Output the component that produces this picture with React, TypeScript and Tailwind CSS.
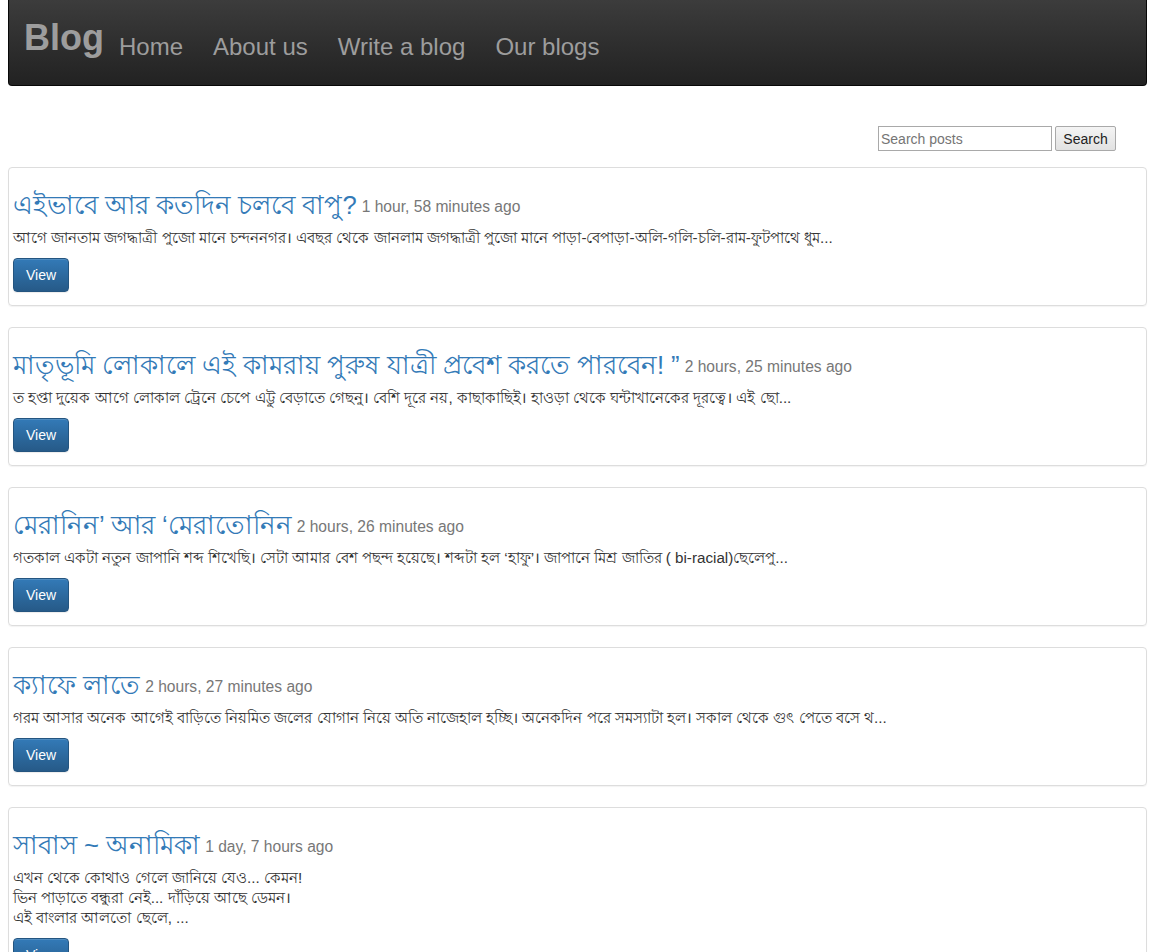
import React from "react";

const posts = [
  {
    title: "এইভাবে আর কতদিন চলবে বাপু?",
    time: "1 hour, 58 minutes ago",
    body: [
      "আগে জানতাম জগদ্ধাত্রী পুজো মানে চন্দননগর। এবছর থেকে জানলাম জগদ্ধাত্রী পুজো মানে পাড়া-বেপাড়া-অলি-গলি-চলি-রাম-ফুটপাথে ধুম...",
    ],
  },
  {
    title: "মাতৃভূমি লোকালে এই কামরায় পুরুষ যাত্রী প্রবেশ করতে পারবেন! ”",
    time: "2 hours, 25 minutes ago",
    body: [
      "ত হপ্তা দুয়েক আগে লোকাল ট্রেনে চেপে এট্টু বেড়াতে গেছনু। বেশি দূরে নয়, কাছাকাছিই। হাওড়া থেকে ঘন্টাখানেকের দূরত্বে। এই ছো...",
    ],
  },
  {
    title: "মেরানিন’ আর ‘মেরাতোনিন",
    time: "2 hours, 26 minutes ago",
    body: [
      "গতকাল একটা নতুন জাপানি শব্দ শিখেছি। সেটা আমার বেশ পছন্দ হয়েছে। শব্দটা হল ‘হাফু’। জাপানে মিশ্র জাতির ( bi-racial)ছেলেপু...",
    ],
  },
  {
    title: "ক্যাফে লাতে",
    time: "2 hours, 27 minutes ago",
    body: [
      "গরম আসার অনেক আগেই বাড়িতে নিয়মিত জলের যোগান নিয়ে অতি নাজেহাল হচ্ছি। অনেকদিন পরে সমস্যাটা হল। সকাল থেকে গুৎ পেতে বসে থ...",
    ],
  },
  {
    title: "সাবাস ~ অনামিকা",
    time: "1 day, 7 hours ago",
    body: [
      "এখন থেকে কোথাও গেলে জানিয়ে যেও... কেমন!",
      "ভিন পাড়াতে বন্ধুরা নেই... দাঁড়িয়ে আছে ডেমন।",
      "এই বাংলার আলতো ছেলে, ...",
    ],
  },
];

const navLinks = ["Home", "About us", "Write a blog", "Our blogs"];

const App = () => {
  return (
    <div className="min-h-screen bg-white pl-2 pr-[7px] font-['Liberation_Sans','Noto_Sans',sans-serif] text-[#333]">
      {/* Navbar */}
      <nav className="flex h-[86px] items-start rounded-b-[4px] border border-t-0 border-[#080808] bg-gradient-to-b from-[#3c3c3c] to-[#222222] pl-[15px]">
        <a className="mt-[20px] text-[36px] font-bold leading-[36px] text-[#9d9d9d]">
          Blog
        </a>
        <ul className="ml-[15px] mt-[35px] flex gap-[30px]">
          {navLinks.map((l) => (
            <li key={l} className="text-[24px] leading-[24px] text-[#9d9d9d]">
              {l}
            </li>
          ))}
        </ul>
      </nav>

      {/* Search */}
      <div className="mr-[31px] mt-[40px] flex justify-end gap-[3px]">
        <input
          placeholder="Search posts"
          className="h-[25px] w-[174px] border border-[#a9a9a9] px-[2px] text-[14px] text-[#333] placeholder:text-[#757575]"
        />
        <button className="h-[25px] w-[61px] rounded-[2px] border border-[#a9a9a9] bg-gradient-to-b from-[#f4f4f4] to-[#e2e2e2] pt-[1px] text-[14px] text-[#222]">
          Search
        </button>
      </div>

      {/* Posts */}
      <div className="mt-[16px] flex flex-col gap-[21px]">
        {posts.map((p) => (
          <div
            key={p.title}
            className="rounded-[4px] border border-[#dddddd] px-[4px] pb-[13px] pt-[22px] shadow-[0_1px_1px_rgba(0,0,0,0.05)]"
          >
            <h3 className="flex h-[30px] items-center whitespace-nowrap text-[#337ab7]">
              <span className="text-[25.6px] leading-[30px]">{p.title}</span>
              <span className="ml-[5px] mt-[4px] text-[15.6px] leading-[30px] text-[#777777]">
                {p.time}
              </span>
            </h3>
            <div className="mt-[8px] text-[15.2px] text-[#333]">
              {p.body.map((b) => (
                <p key={b} className="h-[20px] whitespace-nowrap leading-[20px]">
                  {b}
                </p>
              ))}
            </div>
            <button className="mt-[10px] h-[34px] rounded-[4px] border border-[#245580] bg-gradient-to-b from-[#337ab7] to-[#265a88] px-[12px] text-[14px] text-white shadow-[inset_0_1px_0_rgba(255,255,255,0.15),0_1px_1px_rgba(0,0,0,0.075)]">
              View
            </button>
          </div>
        ))}
      </div>
    </div>
  );
};

export default App;
